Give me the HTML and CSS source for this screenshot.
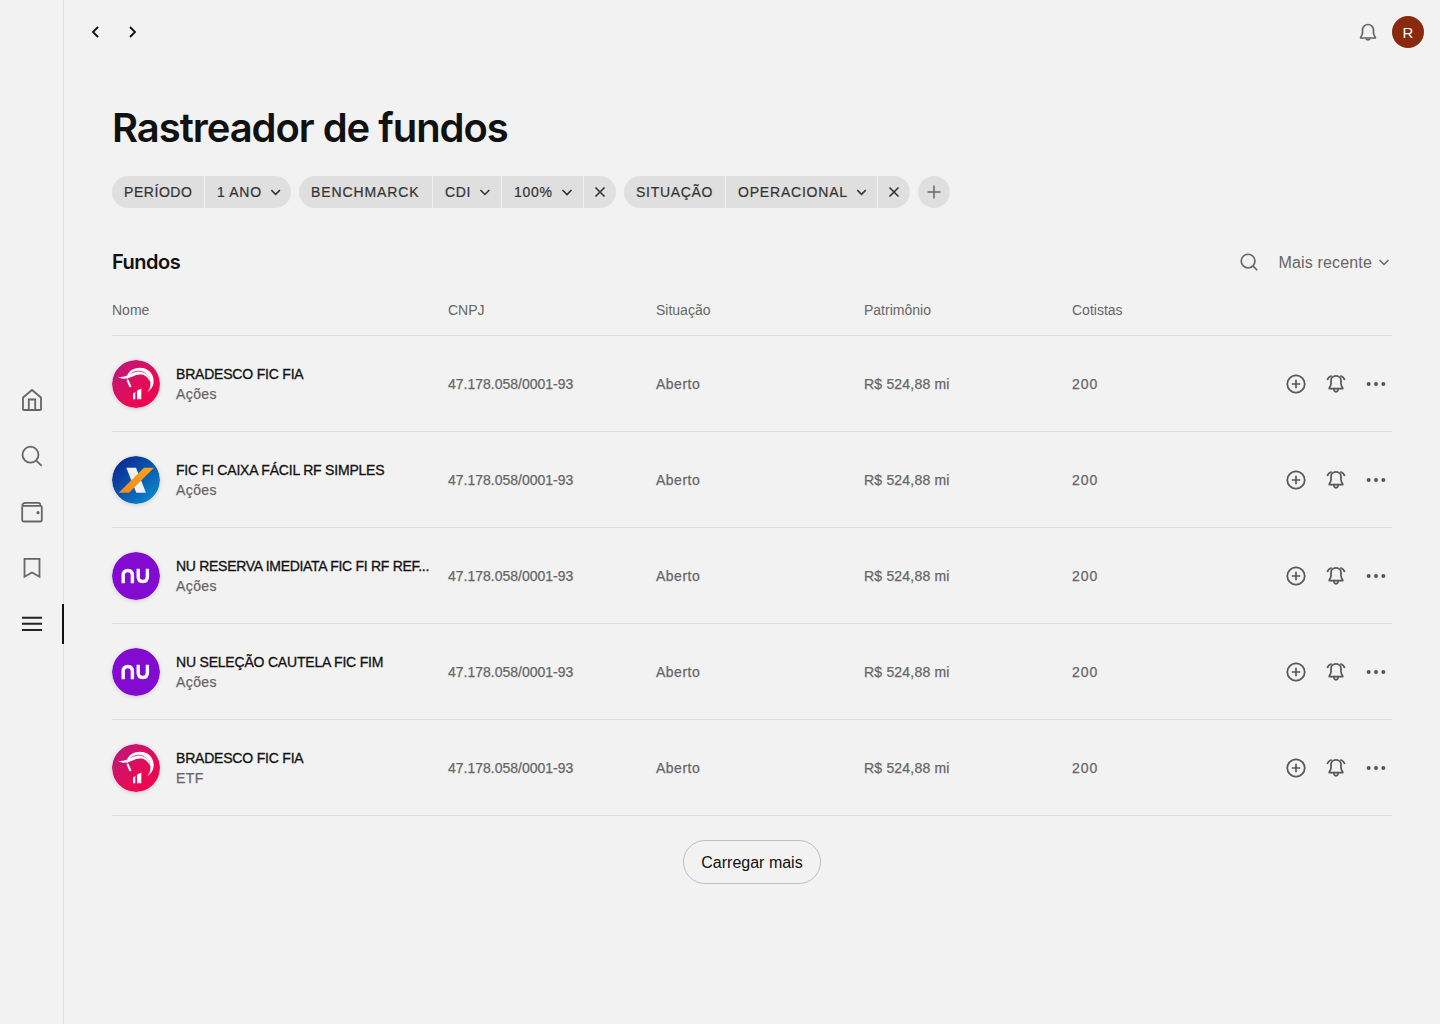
FILE: index.html
```html
<!DOCTYPE html>
<html lang="pt-BR">
<head>
    <meta charset="UTF-8">
    <meta name="viewport" content="width=device-width, initial-scale=1.0">
    <title>Rastreador de fundos</title>
    <link rel="stylesheet" href="styles.css">
</head>
<body>
    <svg class="icon-defs" width="0" height="0" aria-hidden="true">
        <symbol id="i-alarm" viewBox="0 0 24 24">
            <path d="M12 3.800c-3 0-5 2.200-5 5v2.700c0 1.800-.6 3-1.600 4.200-.4.500-.2 1 .4 1h12.400c.6 0 .8-.5.4-1-1-1.200-1.600-2.400-1.600-4.200V8.800c0-2.800-2-5-5-5z" />
            <path d="M9.800 17c.2 1.800 1 2.800 2.200 2.800s2-1 2.200-2.800" />
            <path d="M3.300 8c.5-1.800 2-3.500 4.400-4.300M20.700 8c-.5-1.800-2-3.500-4.400-4.300" />
        </symbol>
        <symbol id="i-plus-circle" viewBox="0 0 24 24">
            <circle cx="12" cy="12" r="8.700" />
            <path d="M12 7.800v8.400M7.800 12h8.400" />
        </symbol>
        <symbol id="i-more" viewBox="0 0 24 24">
            <circle cx="4.700" cy="12" r="2" class="solid" />
            <circle cx="12" cy="12" r="2" class="solid" />
            <circle cx="19.300" cy="12" r="2" class="solid" />
        </symbol>
        <symbol id="i-chevron" viewBox="0 0 16 16">
            <path d="M3.500 6l4.500 4.500L12.500 6" />
        </symbol>
        <symbol id="i-close" viewBox="0 0 16 16">
            <path d="M3.500 3.500l9 9M12.500 3.500l-9 9" />
        </symbol>
        <symbol id="logo-bradesco" viewBox="0 0 48 48">
            <circle cx="24" cy="24" r="24" fill="url(#grad-bradesco)" />
            <path d="M15 20.500C13.500 13 20 7.800 28 7.800c9 0 14.500 7 13.600 15-.5 4.200-3 7.500-6.600 9.700 2.500-3 3.800-6.300 3.400-10-.7-6.800-5.500-11.500-11.500-11.800-6-.3-10.500 3.800-11.900 9.800z" fill="#fff" stroke="none" />
            <path d="M6 16.800c6 1.200 11-2 15-4 5-2.500 11-1.500 14 2 2 2.300 2.800 4.800 2.800 7-1.500-3.500-4-6.500-8-7.200-4-.7-7 .8-10.500 2.500-4 2-9 2.700-13.300-.3z" fill="#fff" stroke="none" />
            <path d="M15.500 20l3 7" fill="none" stroke="#fff" stroke-width="2" />
            <path d="M21 33.500l2.300-1.500v7.300H21zM25 30.500l4.300-2v10.800H25z" fill="#fff" stroke="none" />
        </symbol>
        <symbol id="logo-caixa" viewBox="0 0 48 48">
            <circle cx="24" cy="24" r="24" fill="url(#grad-caixa)" />
            <path d="M14.300 11.700H24l10 25h-9.700z" fill="#eef1f5" stroke="none" />
            <path d="M32 11.700h10L17 36.700H6.700z" fill="url(#grad-caixa-x)" stroke="none" />
        </symbol>
        <symbol id="logo-nu" viewBox="0 0 48 48">
            <circle cx="24" cy="24" r="24" fill="#820ad1" />
            <path d="M11.200 31.300v-7.800c0-3.200 1.800-5 4.600-5s4.600 1.800 4.600 5v7.800" fill="none" stroke="#fff" stroke-width="3.400" />
            <path d="M26.200 16.700v7.800c0 3.200 1.800 5 4.600 5s4.600-1.800 4.600-5v-7.800" fill="none" stroke="#fff" stroke-width="3.400" />
        </symbol>
        <defs>
            <linearGradient id="grad-bradesco" x1="0" y1="0" x2="1" y2="1">
                <stop offset="0" stop-color="#b8197e" />
                <stop offset="0.600" stop-color="#e60b55" />
                <stop offset="1" stop-color="#f5004c" />
            </linearGradient>
            <linearGradient id="grad-caixa" x1="0" y1="0" x2="1" y2="1">
                <stop offset="0" stop-color="#0a1f8a" />
                <stop offset="0.500" stop-color="#0a55ad" />
                <stop offset="1" stop-color="#0a97d6" />
            </linearGradient>
            <linearGradient id="grad-caixa-x" x1="1" y1="0" x2="0" y2="1">
                <stop offset="0" stop-color="#f9a31a" />
                <stop offset="1" stop-color="#f28a1e" />
            </linearGradient>
        </defs>
    </svg>

    <div class="app">
        <!-- Sidebar -->
        <nav class="sidebar">
            <a class="side-link" href="#">
                <svg class="side-icon" viewBox="0 0 24 24"><path d="M3 9.500L12 2l9 7.500V21a1 1 0 0 1-1 1H4a1 1 0 0 1-1-1z" /><path d="M8.800 22V11.500h6.400V22" /></svg>
            </a>
            <a class="side-link" href="#">
                <svg class="side-icon" viewBox="0 0 24 24"><circle cx="10.500" cy="10.700" r="8" /><path d="M16.500 16.800l5.200 5" /></svg>
            </a>
            <a class="side-link" href="#">
                <svg class="side-icon" viewBox="0 0 24 24"><path d="M2.200 6.500V20a1.500 1.500 0 0 0 1.500 1.500h16.600a1.500 1.500 0 0 0 1.500-1.500V7.300a1.500 1.500 0 0 0-1.500-1.500H3" /><path d="M2.200 6.500C2.200 4 3.500 2.800 5.500 2.800h13c1 0 1.700.7 1.700 1.700v1.300" /><circle cx="18" cy="12.700" r="1.600" class="solid" /></svg>
            </a>
            <a class="side-link" href="#">
                <svg class="side-icon" viewBox="0 0 24 24"><path d="M4.500 2.800h15v18l-7.500-4.300-7.500 4.300z" /></svg>
            </a>
            <a class="side-link active" href="#">
                <svg class="side-icon dark" viewBox="0 0 24 24"><path d="M2 5.800h20M2 11.800h20M2 18h20" /></svg>
            </a>
        </nav>

        <div class="content">
            <header class="topbar">
                <div class="history">
                    <svg class="nav-arrow" viewBox="0 0 16 16"><path d="M10 3L5 8l5 5" /></svg>
                    <svg class="nav-arrow" viewBox="0 0 16 16"><path d="M5 3l5 5-5 5" /></svg>
                </div>
                <div class="user-area">
                    <svg class="bell" viewBox="0 0 24 24"><path d="M4.800 17c1.200-1.200 1.700-2.400 1.700-4.200V10a5.500 5.500 0 0 1 11 0v2.800c0 1.800.5 3 1.700 4.200.4.500.2 1-.4 1H5.200c-.6 0-.8-.5-.4-1z" /><path d="M10 18.500a2.100 2.100 0 0 0 4 0" /></svg>
                    <div class="avatar">R</div>
                </div>
            </header>

            <main class="main">
                <h1 class="page-title">Rastreador de fundos</h1>

                <div class="filters">
                    <div class="chip">
                        <span class="chip-part seg-periodo">Período</span>
                        <span class="chip-part seg-ano has-icon">1 ano <svg class="chip-icon"><use href="#i-chevron" /></svg></span>
                    </div>
                    <div class="chip">
                        <span class="chip-part seg-bench">Benchmarck</span>
                        <span class="chip-part seg-cdi has-icon">CDI <svg class="chip-icon"><use href="#i-chevron" /></svg></span>
                        <span class="chip-part seg-pct has-icon">100% <svg class="chip-icon"><use href="#i-chevron" /></svg></span>
                        <span class="chip-part chip-close"><svg class="chip-icon"><use href="#i-close" /></svg></span>
                    </div>
                    <div class="chip">
                        <span class="chip-part seg-situacao">Situação</span>
                        <span class="chip-part seg-oper has-icon">Operacional <svg class="chip-icon"><use href="#i-chevron" /></svg></span>
                        <span class="chip-part chip-close"><svg class="chip-icon"><use href="#i-close" /></svg></span>
                    </div>
                    <button class="chip-add"><svg viewBox="0 0 16 16"><path d="M8 1.500v13M1.500 8h13" /></svg></button>
                </div>

                <section class="funds">
                    <div class="funds-head">
                        <h2>Fundos</h2>
                        <div class="funds-tools">
                            <svg class="search-icon" viewBox="0 0 24 24"><circle cx="11" cy="11" r="7.500" /><path d="M16.500 16.500L21 21" /></svg>
                            <span class="sort">Mais recente <svg class="sort-icon"><use href="#i-chevron" /></svg></span>
                        </div>
                    </div>

                    <div class="fund-row table-head">
                        <span>Nome</span>
                        <span>CNPJ</span>
                        <span>Situação</span>
                        <span>Patrimônio</span>
                        <span>Cotistas</span>
                    </div>

                    <!-- Row 1 -->
                    <div class="fund-row">
                        <div class="fund-name">
                            <svg class="fund-logo"><use href="#logo-bradesco" /></svg>
                            <div class="fund-text"><h3>BRADESCO FIC FIA</h3><p>Ações</p></div>
                        </div>
                        <span class="cell-cnpj">47.178.058/0001-93</span>
                        <span class="cell-status">Aberto</span>
                        <span class="cell-value">R$ 524,88 mi</span>
                        <span class="cell-count">200</span>
                        <div class="row-actions">
                            <svg><use href="#i-plus-circle" /></svg>
                            <svg><use href="#i-alarm" /></svg>
                            <svg><use href="#i-more" /></svg>
                        </div>
                    </div>

                    <!-- Row 2 -->
                    <div class="fund-row">
                        <div class="fund-name">
                            <svg class="fund-logo"><use href="#logo-caixa" /></svg>
                            <div class="fund-text"><h3>FIC FI CAIXA FÁCIL RF SIMPLES</h3><p>Ações</p></div>
                        </div>
                        <span class="cell-cnpj">47.178.058/0001-93</span>
                        <span class="cell-status">Aberto</span>
                        <span class="cell-value">R$ 524,88 mi</span>
                        <span class="cell-count">200</span>
                        <div class="row-actions">
                            <svg><use href="#i-plus-circle" /></svg>
                            <svg><use href="#i-alarm" /></svg>
                            <svg><use href="#i-more" /></svg>
                        </div>
                    </div>

                    <!-- Row 3 -->
                    <div class="fund-row">
                        <div class="fund-name">
                            <svg class="fund-logo"><use href="#logo-nu" /></svg>
                            <div class="fund-text"><h3 class="name-long">NU RESERVA IMEDIATA FIC FI RF REF...</h3><p>Ações</p></div>
                        </div>
                        <span class="cell-cnpj">47.178.058/0001-93</span>
                        <span class="cell-status">Aberto</span>
                        <span class="cell-value">R$ 524,88 mi</span>
                        <span class="cell-count">200</span>
                        <div class="row-actions">
                            <svg><use href="#i-plus-circle" /></svg>
                            <svg><use href="#i-alarm" /></svg>
                            <svg><use href="#i-more" /></svg>
                        </div>
                    </div>

                    <!-- Row 4 -->
                    <div class="fund-row">
                        <div class="fund-name">
                            <svg class="fund-logo"><use href="#logo-nu" /></svg>
                            <div class="fund-text"><h3>NU SELEÇÃO CAUTELA FIC FIM</h3><p>Ações</p></div>
                        </div>
                        <span class="cell-cnpj">47.178.058/0001-93</span>
                        <span class="cell-status">Aberto</span>
                        <span class="cell-value">R$ 524,88 mi</span>
                        <span class="cell-count">200</span>
                        <div class="row-actions">
                            <svg><use href="#i-plus-circle" /></svg>
                            <svg><use href="#i-alarm" /></svg>
                            <svg><use href="#i-more" /></svg>
                        </div>
                    </div>

                    <!-- Row 5 -->
                    <div class="fund-row">
                        <div class="fund-name">
                            <svg class="fund-logo"><use href="#logo-bradesco" /></svg>
                            <div class="fund-text"><h3>BRADESCO FIC FIA</h3><p>ETF</p></div>
                        </div>
                        <span class="cell-cnpj">47.178.058/0001-93</span>
                        <span class="cell-status">Aberto</span>
                        <span class="cell-value">R$ 524,88 mi</span>
                        <span class="cell-count">200</span>
                        <div class="row-actions">
                            <svg><use href="#i-plus-circle" /></svg>
                            <svg><use href="#i-alarm" /></svg>
                            <svg><use href="#i-more" /></svg>
                        </div>
                    </div>
                </section>

                <div class="load-more">
                    <button class="load-more-btn">Carregar mais</button>
                </div>
            </main>
        </div>
    </div>
</body>
</html>
```

FILE: styles.css
```css
* {
    box-sizing: border-box;
    margin: 0;
    padding: 0;
}

body {
    font-family: "Liberation Sans", Arial, sans-serif;
    background-color: #f2f2f2;
    color: #111;
    height: 1024px;
    overflow: hidden;
}

svg {
    fill: none;
    stroke: currentColor;
    stroke-width: 1.5;
}

svg .solid {
    fill: currentColor;
    stroke: none;
}

.icon-defs {
    position: absolute;
}

.app {
    display: flex;
    height: 1024px;
}

/* Sidebar */
.sidebar {
    width: 64px;
    flex-shrink: 0;
    border-right: 1px solid #e0e0e0;
    display: flex;
    flex-direction: column;
    justify-content: center;
    align-items: stretch;
    gap: 16px;
}

.side-link {
    position: relative;
    height: 40px;
    display: flex;
    align-items: center;
    justify-content: center;
    color: #666;
}

.side-link.active::after {
    content: "";
    position: absolute;
    right: -1px;
    top: 0;
    width: 2px;
    height: 40px;
    background: #111;
}

.side-icon {
    width: 24px;
    height: 24px;
    stroke-width: 1.8;
}

.side-icon.dark {
    color: #222;
    stroke-width: 2;
}

.content {
    flex: 1;
    min-width: 0;
}

/* Top bar */
.topbar {
    height: 64px;
    display: flex;
    align-items: center;
    justify-content: space-between;
    padding: 0 16px 0 24px;
}

.history {
    display: flex;
    gap: 21px;
}

.nav-arrow {
    width: 16px;
    height: 16px;
    color: #111;
    stroke-width: 1.8;
}

.user-area {
    display: flex;
    align-items: center;
    gap: 12px;
}

.bell {
    width: 24px;
    height: 24px;
    color: #666;
    stroke-width: 1.7;
}

.avatar {
    width: 32px;
    height: 32px;
    border-radius: 50%;
    background: #8a2a0c;
    color: #fff;
    font-size: 15px;
    display: flex;
    align-items: center;
    justify-content: center;
}

.main {
    padding: 44px 48px 0;
}

.page-title {
    font-size: 40px;
    line-height: 40px;
    font-weight: 600;
    font-family: Inter, "Liberation Sans", sans-serif;
    letter-spacing: -1.05px;
    margin-bottom: 28px;
}

/* Filter chips */
.filters {
    display: flex;
    gap: 8px;
}

.chip {
    display: flex;
    gap: 1px;
    height: 32px;
    border-radius: 16px;
    overflow: hidden;
}

.chip-part {
    display: flex;
    align-items: center;
    flex-shrink: 0;
    padding: 0 12px;
    background: #dfdfdf;
    color: #333;
    font-size: 14px;
    font-weight: 400;
    letter-spacing: 0.7px;
    white-space: nowrap;
    text-transform: uppercase;
    -webkit-text-stroke: 0.2px #333;
}

.chip-part.has-icon {
    gap: 6px;
    padding-right: 8px;
    justify-content: space-between;
}

.chip-close {
    padding: 0 8px;
}

.seg-periodo { width: 92px; letter-spacing: 0.55px; }
.seg-ano { width: 86px; }
.seg-bench { width: 133px; letter-spacing: 0.9px; }
.seg-cdi { width: 68px; }
.seg-pct { width: 81px; }
.seg-situacao { width: 101px; }
.seg-oper { width: 151px; letter-spacing: 0.8px; }

.chip-icon {
    width: 16px;
    height: 16px;
    stroke-width: 1.6;
}

.chip-add {
    width: 32px;
    height: 32px;
    border: none;
    border-radius: 50%;
    background: #dfdfdf;
    color: #666;
    display: flex;
    align-items: center;
    justify-content: center;
}

.chip-add svg {
    width: 16px;
    height: 16px;
}

/* Funds table */
.funds {
    margin-top: 32px;
}

.funds-head {
    height: 44px;
    display: flex;
    align-items: center;
    justify-content: space-between;
}

.funds-head h2 {
    font-size: 20px;
    font-weight: 600;
    font-family: Inter, "Liberation Sans", sans-serif;
    letter-spacing: -0.5px;
}

.funds-tools {
    display: flex;
    align-items: center;
    gap: 19px;
    color: #666;
}

.search-icon {
    width: 22px;
    height: 22px;
    stroke-width: 1.8;
}

.sort {
    display: flex;
    align-items: center;
    gap: 4px;
    padding-top: 1px;
    font-size: 16px;
    letter-spacing: 0.15px;
}

.sort-icon {
    width: 16px;
    height: 16px;
    margin-top: -1px;
}

.fund-row {
    display: grid;
    grid-template-columns: 336px 208px 208px 208px 1fr 108px;
    align-items: center;
    height: 96px;
    border-bottom: 1px solid #dedede;
    color: #666;
    font-size: 14px;
}

.fund-row.table-head {
    height: 52px;
    align-items: start;
    padding-top: 18px;
}

.cell-cnpj,
.cell-status,
.cell-value,
.cell-count,
.fund-text p {
    -webkit-text-stroke: 0.25px #666;
}

.cell-status { letter-spacing: 0.5px; }
.cell-value { letter-spacing: 0.2px; }
.cell-count { letter-spacing: 1px; }

.fund-name {
    display: flex;
    align-items: center;
    gap: 16px;
    min-width: 0;
}

.fund-logo {
    width: 48px;
    height: 48px;
    flex-shrink: 0;
    stroke: none;
    border-radius: 50%;
    box-shadow: 0 1px 4px rgba(0, 0, 0, 0.15);
}

.fund-text {
    min-width: 0;
}

.fund-text h3 {
    font-size: 14px;
    line-height: 20px;
    font-weight: 400;
    color: #111;
    white-space: nowrap;
    letter-spacing: -0.2px;
    -webkit-text-stroke: 0.3px #111;
}

.fund-text h3.name-long {
    letter-spacing: -0.29px;
}

.fund-text p {
    font-size: 14px;
    line-height: 20px;
    letter-spacing: 0.4px;
}

.row-actions {
    display: flex;
    justify-content: flex-end;
    gap: 16px;
    padding-right: 4px;
    color: #555;
}

.row-actions svg {
    width: 24px;
    height: 24px;
    flex-shrink: 0;
    stroke-width: 1.7;
}

.load-more {
    display: flex;
    justify-content: center;
    margin-top: 24px;
}

.load-more-btn {
    width: 138px;
    height: 44px;
    padding-top: 1px;
    border: 1px solid #bdbdbd;
    border-radius: 22px;
    background: transparent;
    color: #111;
    font-family: "Liberation Sans", Arial, sans-serif;
    font-size: 16px;
}
```
